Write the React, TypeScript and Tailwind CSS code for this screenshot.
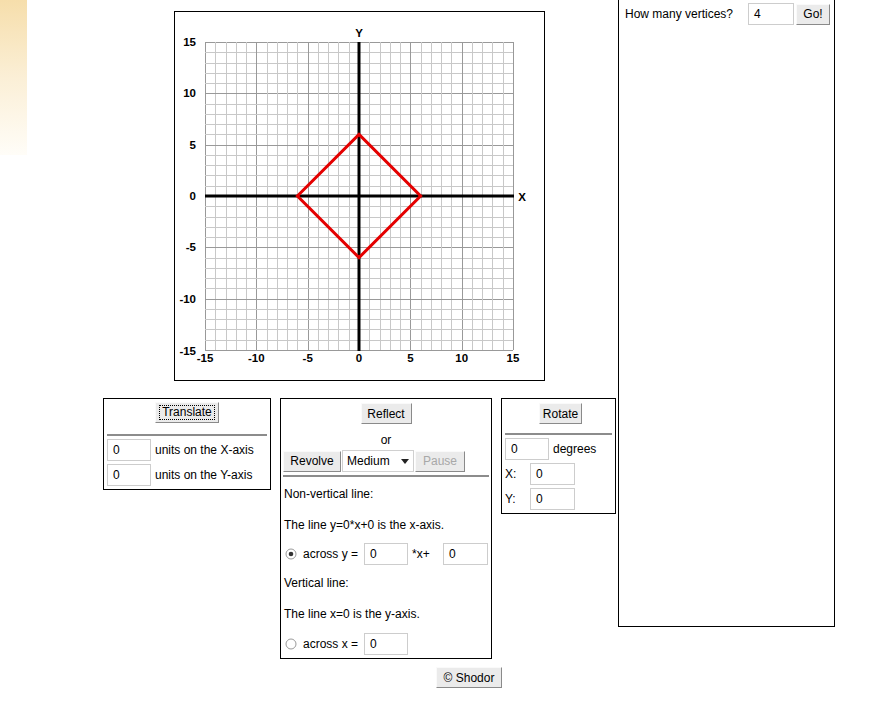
import React from "react";

const U = 308 / 30;
const O = 184;
const p = (i: number) => O + i * U;

function Btn({
  children,
  w,
  disabled,
  focus,
}: {
  children: React.ReactNode;
  w: string;
  disabled?: boolean;
  focus?: boolean;
}) {
  return (
    <div
      className={
        "flex h-[21px] items-center justify-center border border-t-[#fafafa] border-l-[#fafafa] border-r-[#8a8a8a] border-b-[#8a8a8a] bg-[#ebebeb] text-[12px] " +
        w +
        (disabled ? " text-[#a8a8a8]" : " text-black")
      }
    >
      {focus ? (
        <span className="border border-dotted border-black px-[2px] leading-[13px]">{children}</span>
      ) : (
        children
      )}
    </div>
  );
}

function Field({ w = "w-[44px]", value = "0" }: { w?: string; value?: string }) {
  return (
    <div className={"flex h-[22px] items-center border border-[#cdcdcd] bg-white pl-[5px] text-[12px] " + w}>
      {value}
    </div>
  );
}

function Radio({ checked }: { checked?: boolean }) {
  return (
    <svg width="12" height="12" viewBox="0 0 12 12" className="shrink-0">
      <circle cx="6" cy="6" r="5" fill="#fff" stroke="#9a9a9a" />
      {checked && <circle cx="6" cy="6" r="2.3" fill="#333" />}
    </svg>
  );
}

function Graph() {
  const ticks = Array.from({ length: 31 }, (_, k) => k - 15);
  const labels = [15, 10, 5, 0, -5, -10, -15];
  return (
    <svg width="369" height="368" viewBox="0 0 369 368" className="block">
      {ticks.map((i) => {
        const major = i % 5 === 0;
        const v = Math.round(p(i)) + 0.5;
        return (
          <g key={i} stroke={major ? "#999999" : "#c8c8c8"} strokeWidth="1">
            <line x1={v} y1={30} x2={v} y2={338} />
            <line x1={30} y1={v} x2={338} y2={v} />
          </g>
        );
      })}
      <line x1={30} y1={O} x2={339} y2={O} stroke="#000" strokeWidth="3" />
      <line x1={O} y1={30} x2={O} y2={339} stroke="#000" strokeWidth="3" />
      <polygon
        points={`${p(-6)},${O} ${O},${p(-6)} ${p(6)},${O} ${O},${p(6)}`}
        fill="none"
        stroke="#e40000"
        strokeWidth="3"
      />
      <g fontFamily="'Liberation Sans', Arial, sans-serif" fontWeight="bold" fontSize="11.5" fill="#000">
        {labels.map((n) => (
          <text key={"l" + n} x={21} y={n === -15 ? 343 : p(-n) + 4} textAnchor="end">
            {n}
          </text>
        ))}
        {labels.map((n) => (
          <text key={"b" + n} x={p(n)} y={350} textAnchor="middle">
            {n}
          </text>
        ))}
        <text x={O} y={25} textAnchor="middle">
          Y
        </text>
        <text x={347} y={189} textAnchor="middle">
          X
        </text>
      </g>
    </svg>
  );
}

export default function App() {
  return (
    <div className="flex h-[701px] w-[885px] items-start overflow-hidden bg-white font-['Liberation_Sans',Arial,sans-serif] text-[12px] text-black">
      <div className="h-[155px] w-[27px] shrink-0 bg-gradient-to-b from-[#f6deab] via-[#fbefd6] to-[#fffdf8]" />

      <div className="ml-[76px] flex w-[515px] shrink-0 flex-col">
        <div className="ml-[71px] mt-[11px] h-[370px] w-[371px] border border-black">
          <Graph />
        </div>

        <div className="mt-[17px] flex items-start">
          {/* Translate */}
          <div className="flex w-[168px] flex-col border border-black pb-[3px]">
            <div className="flex justify-center pt-[3px]">
              <Btn w="w-[64px]" focus>
                Translate
              </Btn>
            </div>
            <div className="mx-[3px] mt-[11px] h-[2px] bg-[#8c8c8c]" />
            <div className="mt-[3px] flex items-center gap-[4px] pl-[3px]">
              <Field />
              <span>units on the X-axis</span>
            </div>
            <div className="mt-[3px] flex items-center gap-[4px] pl-[3px]">
              <Field />
              <span>units on the Y-axis</span>
            </div>
          </div>

          {/* Reflect */}
          <div className="ml-[9px] flex h-[261px] w-[212px] flex-col border border-black">
            <div className="flex justify-center pt-[4px]">
              <Btn w="w-[51px]">Reflect</Btn>
            </div>
            <div className="flex h-[26px] items-center justify-center pt-[6px]">or</div>
            <div className="flex items-center pl-[2px]">
              <Btn w="w-[58px]">Revolve</Btn>
              <div className="ml-[1px] flex h-[22px] w-[72px] items-center justify-between border border-[#d0d0d0] bg-white pl-[4px] pr-[4px]">
                <span>Medium</span>
                <svg width="8" height="5" viewBox="0 0 8 5">
                  <path d="M0 0h8L4 5z" fill="#222" />
                </svg>
              </div>
              <div className="ml-[1px]">
                <Btn w="w-[50px]" disabled>
                  Pause
                </Btn>
              </div>
            </div>
            <div className="mx-[2px] mt-[3px] h-[2px] bg-[#8c8c8c]" />
            <div className="flex h-[34px] items-center pl-[3px]">Non-vertical line:</div>
            <div className="flex h-[28px] items-center pl-[3px]">The line y=0*x+0 is the x-axis.</div>
            <div className="flex h-[30px] items-center pl-[4px]">
              <Radio checked />
              <span className="ml-[6px] w-[61px]">across y =</span>
              <Field w="w-[44px]" />
              <span className="ml-[4px] w-[31px]">*x+</span>
              <Field w="w-[45px]" />
            </div>
            <div className="flex h-[28px] items-center pl-[3px]">Vertical line:</div>
            <div className="flex h-[34px] items-center pl-[3px]">The line x=0 is the y-axis.</div>
            <div className="flex h-[26px] items-center pl-[4px]">
              <Radio />
              <span className="ml-[6px] w-[61px]">across x =</span>
              <Field w="w-[44px]" />
            </div>
          </div>

          {/* Rotate */}
          <div className="ml-[9px] flex w-[115px] flex-col border border-black pb-[3px]">
            <div className="flex justify-center pl-[4px] pt-[4px]">
              <Btn w="w-[43px]">Rotate</Btn>
            </div>
            <div className="mx-[3px] mt-[9px] h-[2px] bg-[#8c8c8c]" />
            <div className="mt-[3px] flex items-center gap-[4px] pl-[3px]">
              <Field />
              <span>degrees</span>
            </div>
            <div className="mt-[3px] flex items-center pl-[3px]">
              <span className="w-[25px]">X:</span>
              <Field w="w-[45px]" />
            </div>
            <div className="mt-[3px] flex items-center pl-[3px]">
              <span className="w-[25px]">Y:</span>
              <Field w="w-[45px]" />
            </div>
          </div>
        </div>

        <div className="ml-[333px] mt-[8px]">
          <Btn w="w-[66px]">© Shodor</Btn>
        </div>
      </div>

      <div className="-mt-[1px] flex h-[628px] w-[217px] shrink-0 flex-col border border-t-0 border-black">
        <div className="mt-[4px] flex items-center pl-[6px]">
          <span className="w-[123px]">How many vertices?</span>
          <Field w="w-[46px]" value="4" />
          <div className="ml-[2px]">
            <Btn w="w-[34px]">Go!</Btn>
          </div>
        </div>
      </div>
    </div>
  );
}
